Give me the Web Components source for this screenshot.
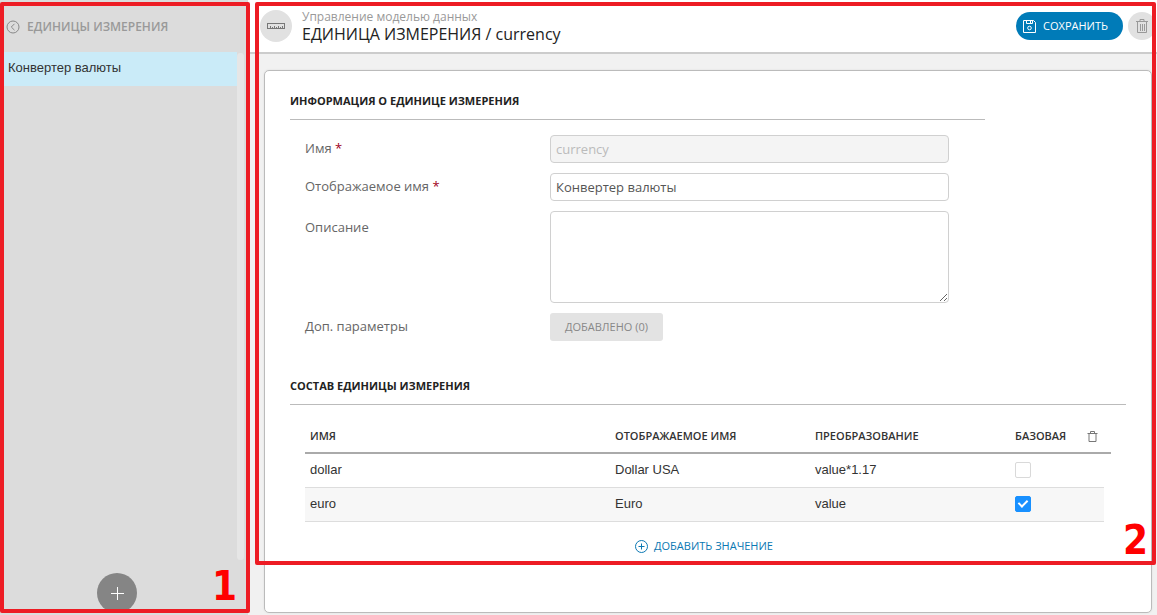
<!DOCTYPE html>
<html lang="ru">
<head>
<meta charset="utf-8">
<title>Единицы измерения</title>
<style>
  html, body { height: 100%; margin: 0; }
  body { overflow: hidden; background: #f1f1f1; font: 13px/18px "Open Sans", "Noto Sans", sans-serif; color: #666; }
</style>
</head>
<body>
<units-app>
  <unit-sidebar slot="sidebar" heading="ЕДИНИЦЫ ИЗМЕРЕНИЯ">
    <unit-item>Конвертер валюты</unit-item>
  </unit-sidebar>
  <page-header slot="main">
    <span slot="section">Управление моделью данных</span>
    <span slot="kind">ЕДИНИЦА ИЗМЕРЕНИЯ /</span>
    <span slot="name">currency</span>
  </page-header>
  <content-card slot="main">
    <form-section class="narrow" heading="ИНФОРМАЦИЯ О ЕДИНИЦЕ ИЗМЕРЕНИЯ">
      <form-field label="Имя" kind="text" value="currency" required disabled></form-field>
      <form-field label="Отображаемое имя" kind="text" value="Конвертер валюты" required></form-field>
      <form-field label="Описание" kind="area"></form-field>
      <form-field label="Доп. параметры" kind="button" value="ДОБАВЛЕНО (0)"></form-field>
    </form-section>
    <form-section heading="СОСТАВ ЕДИНИЦЫ ИЗМЕРЕНИЯ">
      <values-table></values-table>
    </form-section>
  </content-card>
</units-app>

<script>
const define = (name, html, setup) => customElements.define(name, class extends HTMLElement {
  connectedCallback() {
    if (this.shadowRoot) return;
    const template = document.createElement('template');
    template.innerHTML = typeof html === 'function' ? html(this) : html;
    this.attachShadow({ mode: 'open' }).append(template.content.cloneNode(true));
    if (setup) setup(this, this.shadowRoot);
  }
});

define('region-mark', `
  <style>
    :host { position: absolute; z-index: 5; box-sizing: border-box; border: 4px solid #ed1c24; border-radius: 2px; pointer-events: none;
      display: flex; justify-content: flex-end; align-items: flex-end;
      font: bold 40px/42px "DejaVu Sans Condensed", "DejaVu Sans", sans-serif; color: #f00; }
    span { padding: 0 var(--mark-gap, 4px) var(--mark-rise, 0) 0; }
  </style>
  <span><slot></slot></span>`);

define('units-app', `
  <style>
    :host { display: grid; grid-template-columns: 248px minmax(0, 1fr); height: 100vh; }
    main { position: relative; display: flex; flex-direction: column; min-width: 0; overflow: hidden; }
    aside { position: relative; display: flex; }
    .first { inset: 2px -2px 2px 0; --mark-gap: 9px; --mark-rise: 2px; }
    .second { inset: 2px 1px 50px 7px; }
  </style>
  <aside><slot name="sidebar"></slot><region-mark class="first">1</region-mark></aside>
  <main><slot name="main"></slot><region-mark class="second">2</region-mark></main>`);

define('unit-sidebar', el => `
  <style>
    :host { flex: 1; display: flex; flex-direction: column; background: #dcdcdc; }
    header { box-sizing: border-box; display: flex; align-items: center; gap: 7px; height: 52px; padding: 2px 0 0 6px; }
    h2 { margin: 0; font-size: 12px; line-height: 18px; font-weight: 600; color: #999; }
    button { border: 0; padding: 0; background: none; display: flex; }
    .list { flex: 1; display: flex; align-items: stretch; padding-right: 4px; }
    nav { flex: 1; }
    .track { width: 7px; margin-top: 1px; border-radius: 4px; background: #e6e6e6; }
    footer { display: flex; justify-content: center; padding: 13px 14px 2px 0; }
    .add { width: 40px; height: 40px; border-radius: 50%; background: #858585; align-items: center; justify-content: center; }
  </style>
  <header>
    <button type="button" aria-label="Назад">
      <svg width="14" height="14" viewBox="0 0 14 14" fill="none" stroke="#888"><circle cx="7" cy="7" r="6"/><path d="M8.5 3.8 5.3 7l3.2 3.2"/></svg>
    </button>
    <h2>${el.getAttribute('heading')}</h2>
  </header>
  <div class="list"><nav><slot></slot></nav><div class="track"></div></div>
  <footer><button class="add" type="button" aria-label="Добавить">
    <svg width="14" height="14" viewBox="0 0 14 14" stroke="#fff" fill="none"><path d="M7.5 1v13M1 7.5h13"/></svg>
  </button></footer>`);

define('unit-item', `
  <style>
    :host { display: block; }
    a { display: block; padding: 7px 8px 9px; background: #caebf8; color: #333; text-decoration: none;
      font: 13px/18px "Liberation Sans", Arial, sans-serif; }
  </style>
  <a href="#currency"><slot></slot></a>`);

define('page-header', `
  <style>
    :host { flex: none; display: flex; align-items: center; gap: 10px; height: 52px; padding-left: 12px; background: #fff; border-bottom: 2px solid #ccc; }
    .icon, .delete { flex: none; display: flex; align-items: center; justify-content: center; width: 32px; height: 32px; border: 0; padding: 0; border-radius: 50%; background: #e1e1e1; }
    .delete { width: 28px; height: 28px; }
    .titles { flex: 1; min-width: 0; padding-top: 1px; white-space: nowrap; }
    .section { font-size: 12px; line-height: 14px; color: #999; }
    h1 { margin: 0; font-size: 16px; line-height: 20px; font-weight: 400; color: #222; }
    .kind { font-weight: 500; }
    .actions { display: flex; gap: 5px; margin-right: 1px; }
    .save { display: flex; align-items: center; gap: 7px; height: 28px; padding: 0 15px 0 7px; border: 0; border-radius: 14px; background: #007bb8; color: #fff;
      font: 11px/18px "Open Sans", sans-serif; }
  </style>
  <div class="icon"><svg width="18" height="8" viewBox="0 0 18 8" fill="none" stroke="#777"><rect x=".5" y="1.5" width="17" height="5"/><path d="M3.5 4v2M5.5 5v1M7.5 4v2M9.5 5v1M11.5 4v2M13.5 5v1M15.5 4v2"/></svg></div>
  <div class="titles">
    <div class="section"><slot name="section"></slot></div>
    <h1><span class="kind"><slot name="kind"></slot></span> <slot name="name"></slot></h1>
  </div>
  <div class="actions">
    <button class="save" type="button">
      <svg width="13" height="13" viewBox="0 0 13 13" fill="none" stroke="#fff"><path d="M.5 .5h10l2 2v10H.5z"/><path d="M3.500 .5v3h6v-3M7.500 1v2"/><circle cx="6.500" cy="8" r="1.800"/></svg>
      СОХРАНИТЬ
    </button>
    <button class="delete" type="button" aria-label="Удалить">
      <svg width="12" height="14" viewBox="0 0 12 14" fill="none" stroke="#999"><path d="M0 2.500h12M4 2V.5h4V2M1.500 3v10.500h9V3M4.500 5v7M6.500 5v7M8.500 5v7"/></svg>
    </button>
  </div>`);

define('content-card', `
  <style>
    :host { flex: 1; min-height: 0; margin: 16px 5px 2px 16px; padding: 21px 25px 0; border: 1px solid #bbb; border-radius: 5px; background: #fff; box-shadow: 0 0 2px #ddd;
      display: flex; flex-direction: column; gap: 36px; }
  </style>
  <slot></slot>`);

define('form-section', el => `
  <style>
    :host { display: block; }
    :host(.narrow) { max-width: 695px; }
    h3 { margin: 0; padding-bottom: 9px; border-bottom: 1px solid #bbb; font-size: 11px; line-height: 18px; font-weight: 700; color: #222; }
    .body { display: flex; flex-direction: column; gap: 10px; padding: 15px 15px 0; }
  </style>
  <h3>${el.getAttribute('heading')}</h3>
  <div class="body"><slot></slot></div>`);

define('form-field', el => {
  const kind = el.getAttribute('kind'), value = el.getAttribute('value') || '';
  const control = kind === 'area' ? '<textarea id="control"></textarea>'
    : kind === 'button' ? `<button id="control" type="button">${value}</button>`
    : `<input id="control" type="text" value="${value}"${el.hasAttribute('disabled') ? ' disabled' : ''}>`;
  return `
  <style>
    :host { display: grid; grid-template-columns: 245px minmax(0, 399px); justify-items: start; }
    label { padding-top: 4px; font-size: 13px; line-height: 18px; color: #666; }
    :host([kind="area"]) label { padding-top: 7px; }
    b { font-weight: 400; color: #a00020; }
    input, textarea { box-sizing: border-box; display: block; width: 100%; height: 28px; margin: 0; padding: 0 5px; border: 1px solid #d0d0d0; border-radius: 4px;
      background: #fff; color: #555; font: 13px/18px "Open Sans", sans-serif; }
    input:disabled { background: #f4f4f4; color: #bbb; }
    textarea { height: 92px; }
    button { height: 28px; padding: 0 15px; border: 0; border-radius: 3px; background: #e3e3e3; color: #888; font: 11px/18px "Open Sans", sans-serif; }
  </style>
  <label for="control">${el.getAttribute('label')}${el.hasAttribute('required') ? ' <b>*</b>' : ''}</label>
  ${control}`;
});

define('values-table', `
  <style>
    :host { display: block; }
    table { width: 100%; border-collapse: separate; border-spacing: 0; table-layout: fixed; text-align: left; }
    th { height: 32px; padding: 0 5px; border-bottom: 2px solid #aaa; font-size: 11px; line-height: 18px; font-weight: 600; color: #333; }
    td { height: 31px; padding: 0 5px 2px; border-bottom: 1px solid #ddd; font: 13px/18px "Liberation Sans", Arial, sans-serif; color: #333; }
    tbody tr:nth-child(even) td { background: #f7f7f7; }
    th.icon, th.gutter { padding: 0; }
    th svg, td input { display: block; }
    input { appearance: none; box-sizing: border-box; width: 16px; height: 16px; margin: 0; border: 1px solid #d9d9d9; border-radius: 2px; background: #fff; }
    input:checked { border-color: #1890ff; background: #1890ff; }
    input:checked::after { content: ""; display: block; box-sizing: border-box; width: 6px; height: 9px; margin: 1px 4px; border: solid #fff; border-width: 0 2px 2px 0; transform: rotate(45deg); }
    .more { display: flex; justify-content: center; padding: 15px 8px 0 0; }
    .more button { display: flex; align-items: center; gap: 6px; border: 0; padding: 0; background: none; color: #0b78b3; font: 11px/18px "Open Sans", sans-serif; }
    col.c-text { width: 200px; } col.c-base { width: 77px; } col.c-remove { width: 17px; } col.c-gutter { width: 7px; }
  </style>
  <table>
    <colgroup><col><col class="c-text"><col class="c-text"><col class="c-base"><col class="c-remove"><col class="c-gutter"></colgroup>
    <thead><tr>
      <th>ИМЯ</th><th>ОТОБРАЖАЕМОЕ ИМЯ</th><th>ПРЕОБРАЗОВАНИЕ</th><th>БАЗОВАЯ</th>
      <th class="icon"><svg width="11" height="11" viewBox="0 0 11 11" fill="none" stroke="#777"><path d="M.5 2.500h10M3.500 2V.5h4V2M2 3v7.500h7V3"/></svg></th>
      <th class="gutter"></th>
    </tr></thead>
    <tbody>
      <tr><td>dollar</td><td>Dollar USA</td><td>value*1.17</td><td><input type="checkbox" aria-label="Базовая: dollar"></td><td></td></tr>
      <tr><td>euro</td><td>Euro</td><td>value</td><td><input type="checkbox" aria-label="Базовая: euro" checked></td><td></td></tr>
    </tbody>
  </table>
  <div class="more"><button type="button">
    <svg width="13" height="13" viewBox="0 0 13 13" fill="none" stroke="#0b78b3"><circle cx="6.500" cy="6.500" r="6"/><path d="M6.500 3.500v6M3.500 6.500h6"/></svg>
    ДОБАВИТЬ ЗНАЧЕНИЕ
  </button></div>`);
</script>
</body>
</html>
